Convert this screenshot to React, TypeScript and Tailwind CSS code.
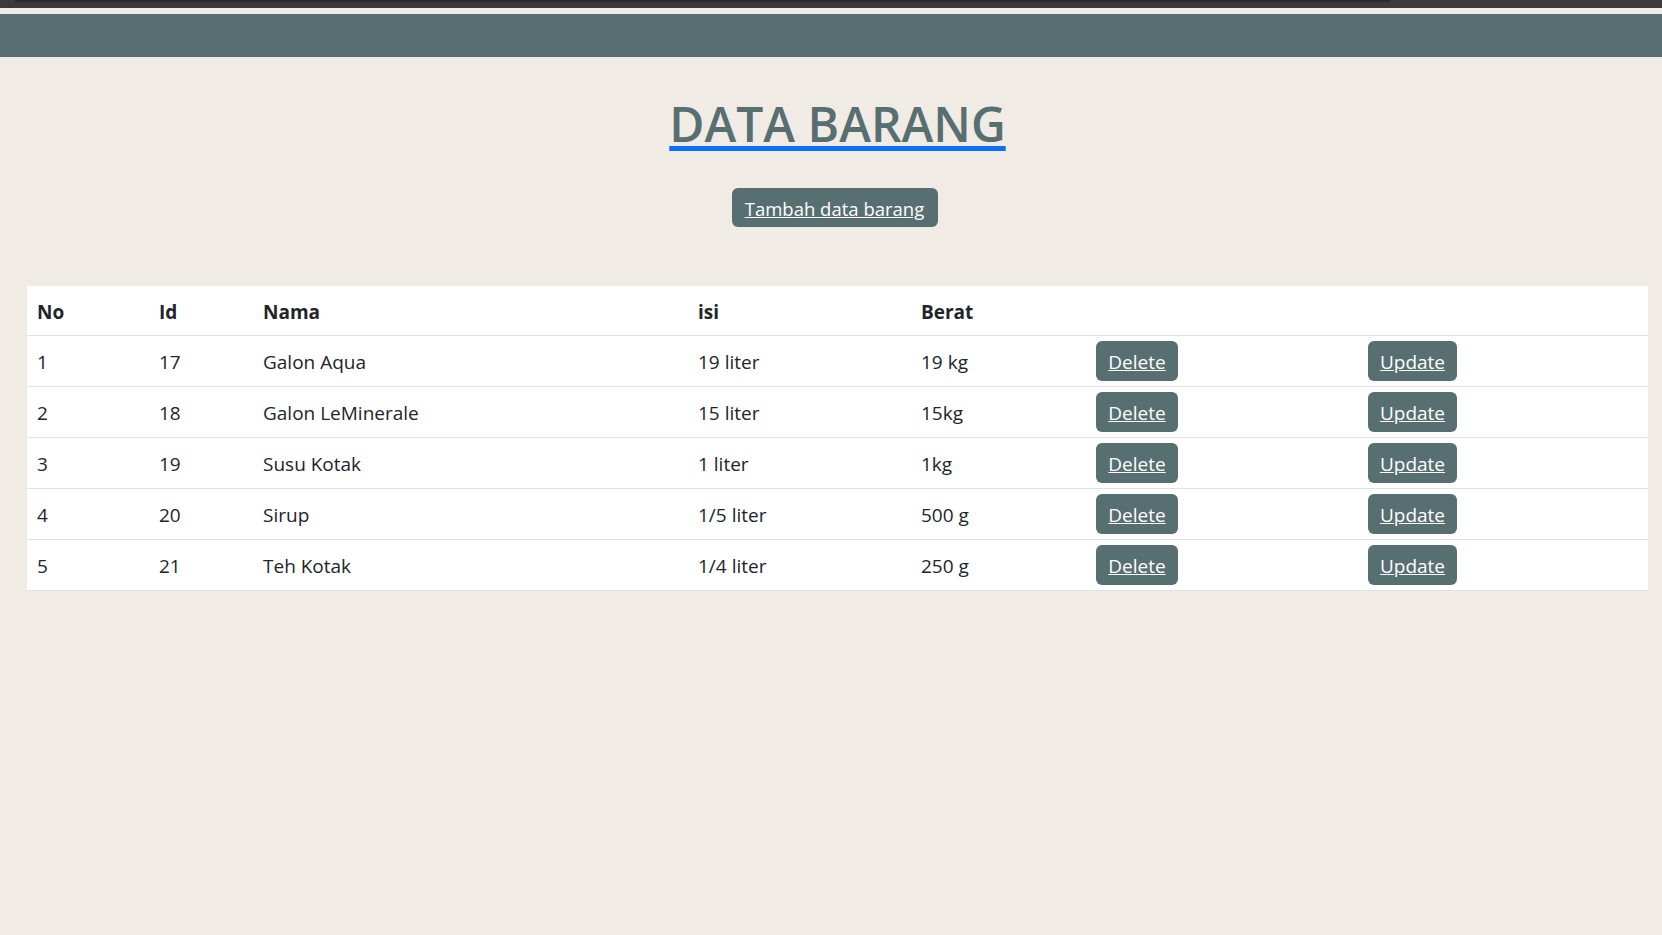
const rows = [
  { no: 1, id: 17, nama: 'Galon Aqua', isi: '19 liter', berat: '19 kg' },
  { no: 2, id: 18, nama: 'Galon LeMinerale', isi: '15 liter', berat: '15kg' },
  { no: 3, id: 19, nama: 'Susu Kotak', isi: '1 liter', berat: '1kg' },
  { no: 4, id: 20, nama: 'Sirup', isi: '1/5 liter', berat: '500 g' },
  { no: 5, id: 21, nama: 'Teh Kotak', isi: '1/4 liter', berat: '250 g' },
];

const cols = 'grid grid-cols-[122px_104px_435px_223px_175px_272px_1fr] items-center border-b border-[#dee2e6]';
const cell = 'pl-[10px] pt-[3px]';
const btn = 'flex h-[40px] items-center justify-center rounded-[6px] bg-[#586f72] pt-[2px] text-white underline';

export default function App() {
  return (
    <div className="min-h-[935px] bg-[#f0ebe4] font-['Segoe_UI','Open_Sans',sans-serif] text-[#212529]">
      {/* browser strip */}
      <div className="h-[8px] bg-[#3b3b3b]">
        <div className="ml-[15px] mr-[272px] h-[2px] bg-[#2a2a2a]" />
      </div>
      <div className="h-[6px] bg-[#f0ebe4]" />
      <div className="h-[43px] bg-[#586f72]" />

      <div className="pl-[27px] pr-[14px]">
        <h1 className="mt-[37px] text-center text-[48px] leading-[60px] font-semibold">
          <a
            href="#"
            className="text-[#586f72] underline decoration-[#0d6efd] decoration-[5px] underline-offset-[4px]"
          >
            DATA BARANG
          </a>
        </h1>

        <div className="mt-[34px] flex justify-center pr-[6px]">
          <a
            href="#"
            className="flex h-[39px] w-[206px] items-center justify-center rounded-[6px] bg-[#586f72] pt-[2px] text-[18.5px] text-white underline"
          >
            Tambah data barang
          </a>
        </div>

        <div className="mt-[59px] bg-white">
          <div className={`${cols} h-[50px] text-[19px] font-bold`}>
            <div className={cell}>No</div>
            <div className={cell}>Id</div>
            <div className={cell}>Nama</div>
            <div className={cell}>isi</div>
            <div className={cell}>Berat</div>
            <div />
            <div />
          </div>
          {rows.map(r => (
            <div key={r.id} className={`${cols} h-[51px] text-[19px]`}>
              <div className={cell}>{r.no}</div>
              <div className={cell}>{r.id}</div>
              <div className={cell}>{r.nama}</div>
              <div className={cell}>{r.isi}</div>
              <div className={cell}>{r.berat}</div>
              <div className="pl-[10px]">
                <a href="#" className={`${btn} w-[82px]`}>
                  Delete
                </a>
              </div>
              <div className="pl-[10px]">
                <a href="#" className={`${btn} w-[89px]`}>
                  Update
                </a>
              </div>
            </div>
          ))}
        </div>
      </div>
    </div>
  );
}
